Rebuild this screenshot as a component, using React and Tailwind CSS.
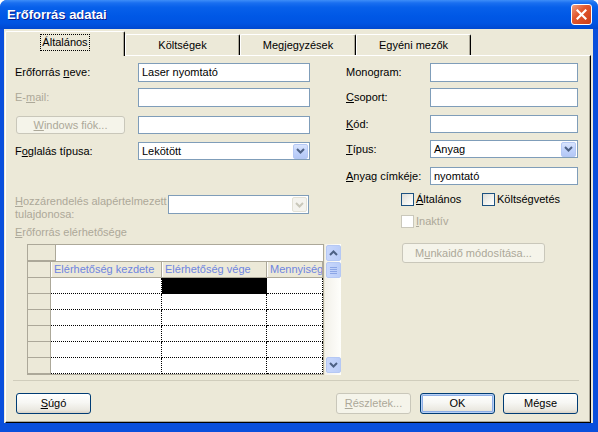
import React from 'react';

const FONT = { fontFamily: '"Liberation Sans", Arial, sans-serif' };

// underline for the access-key letter
const U = ({ children }) => <span className="underline underline-offset-[1px]">{children}</span>;

function Chevron({ up = false, color = '#4D6185' }) {
  return (
    <svg width="9" height="6" viewBox="0 0 9 6" className="block">
      <path d={up ? 'M1 5 L4.5 1.5 L8 5' : 'M1 1 L4.5 4.5 L8 1'} fill="none" stroke={color} strokeWidth="2" />
    </svg>
  );
}

function TextBox({ value = '', className = '' }) {
  return (
    <div className={`h-full bg-white border border-[#7F9DB9] flex items-center pl-[3px] text-black ${className}`}>
      {value}
    </div>
  );
}

function Select({ value = '', disabled = false, className = '' }) {
  return (
    <div className={`h-full bg-white border border-[#7F9DB9] flex items-center pl-[3px] pr-[1px] ${className}`}>
      <span className="flex-1">{value}</span>
      {disabled ? (
        <div className="w-[15px] h-[15px] rounded-[2px] bg-[#F4F3EE] border border-[#E3E1D6] flex items-center justify-center">
          <Chevron color="#C9C7BA" />
        </div>
      ) : (
        <div className="w-[15px] h-[15px] rounded-[2px] bg-[linear-gradient(180deg,#D9E4FD_0%,#C1D3FB_50%,#B4C8F6_100%)] border border-[#B5C8F4] flex items-center justify-center">
          <Chevron />
        </div>
      )}
    </div>
  );
}

function XPButton({ children, disabled = false, isDefault = false, className = '' }) {
  if (disabled) {
    return (
      <div className={`h-[21px] rounded-[3px] border border-[#C9C7BA] bg-[#F5F4EA] text-[#ACA899] flex items-center justify-center ${className}`}>
        {children}
      </div>
    );
  }
  return (
    <div
      className={`h-[21px] rounded-[3px] border border-[#003C74] bg-[linear-gradient(180deg,#FFFFFF_0%,#F7F7F4_45%,#EAE8E0_85%,#D8D2C6_100%)] text-black flex items-center justify-center ${
        isDefault ? 'shadow-[inset_0_0_0_1px_#B9D1F6,inset_0_0_0_2px_#8DAEE6]' : ''
      } ${className}`}
    >
      {children}
    </div>
  );
}

function Checkbox({ label, disabled = false }) {
  return (
    <div className="flex items-center h-[13px]">
      <div
        className={`w-[13px] h-[13px] border ${
          disabled ? 'border-[#CAC8BB] bg-white' : 'border-[#1C5180] bg-[linear-gradient(135deg,#DCDCD7_0%,#F4F4F0_60%,#FFFFFF_100%)]'
        }`}
      />
      <span className={`ml-[2px] ${disabled ? 'text-[#ACA899]' : 'text-black'}`}>{label}</span>
    </div>
  );
}

function ScrollBtn({ up }) {
  return (
    <div className="w-[15px] h-[16px] rounded-[2px] bg-[linear-gradient(90deg,#C8D7FC_0%,#BACDF8_100%)] border border-[#B5C8F4] flex items-center justify-center">
      <Chevron up={up} />
    </div>
  );
}

const COLS = [
  { title: 'Elérhetőség kezdete', w: 'w-[111px]' },
  { title: 'Elérhetőség vége', w: 'w-[105px]' },
  { title: 'Mennyiség', w: 'w-[56px]' },
];

function AvailabilityGrid() {
  const rows = [0, 1, 2, 3, 4, 5, 6];
  return (
    <div className="flex h-[131px] w-[314px]">
      <div className="w-[297px] h-full border border-[#ACA899] overflow-hidden bg-white">
        {/* empty top row */}
        <div className="flex h-[16px]">
          <div className="w-[28px] h-full bg-[#ECE9D8] border-r border-b border-[#ACA899]" />
          <div className="flex-1 h-full bg-white" />
        </div>
        {/* column headers */}
        <div className="flex h-[17px]">
          <div className="w-[23px] h-full bg-[#ECE9D8] border-r border-b border-t border-[#ACA899]" />
          {COLS.map((c) => (
            <div
              key={c.title}
              className={`${c.w} h-full bg-[#ECE9D8] border-r border-b border-t border-[#ACA899] shadow-[inset_1px_0_0_#FFFFFF] text-[#6E85E0] pl-[3px] flex items-center whitespace-nowrap overflow-hidden`}
            >
              {c.title}
            </div>
          ))}
        </div>
        {rows.map((r) => (
          <div key={r} className="flex h-[16px]">
            <div className="w-[23px] h-full bg-[#ECE9D8] border-r border-b border-[#ACA899]" />
            {COLS.map((c, i) => (
              <div
                key={c.title}
                className={`${c.w} h-full border-r border-b border-dotted border-black ${r === 0 && i === 1 ? 'bg-black' : 'bg-white'}`}
              />
            ))}
          </div>
        ))}
      </div>
      {/* vertical scroll bar */}
      <div className="ml-[1px] w-[16px] h-full bg-[linear-gradient(90deg,#F3F1EA_0%,#FEFEFB_100%)] flex flex-col items-center pt-[1px]">
        <ScrollBtn up />
        <div className="mt-[1px] w-[15px] h-[16px] rounded-[2px] bg-[linear-gradient(90deg,#C8D7FC_0%,#BACDF8_100%)] border border-[#B5C8F4] flex flex-col items-center justify-center gap-[1px]">
          <div className="w-[7px] h-[1px] bg-[#8CA6E6]" />
          <div className="w-[7px] h-[1px] bg-[#8CA6E6]" />
          <div className="w-[7px] h-[1px] bg-[#8CA6E6]" />
          <div className="w-[7px] h-[1px] bg-[#8CA6E6]" />
        </div>
        <div className="flex-1" />
        <div className="mb-[2px]">
          <ScrollBtn />
        </div>
      </div>
    </div>
  );
}

function Tab({ children, active = false, className = '' }) {
  if (active) {
    return (
      <div
        className={`relative z-10 h-[25px] mb-[-1px] bg-[#ECE9D8] border-l border-t border-white border-r border-r-black rounded-t-[2px] shadow-[inset_-1px_0_0_#ACA899] flex items-start justify-center pt-[3px] ${className}`}
      >
        <span className="outline-1 outline-dotted outline-black px-[1px] leading-[15px]">{children}</span>
      </div>
    );
  }
  return (
    <div
      className={`h-[21px] bg-[#ECE9D8] border-l border-t border-white border-r border-r-black rounded-t-[2px] shadow-[inset_-1px_0_0_#ACA899] flex items-center justify-center ${className}`}
    >
      {children}
    </div>
  );
}

export default function App() {
  return (
    <div className="w-[598px] h-[432px] overflow-hidden bg-white text-[11px] leading-[13px]" style={FONT}>
      <div className="w-full h-full rounded-t-[7px] bg-[#0A4FDC] flex flex-col overflow-hidden">
        {/* Title bar */}
        <div className="h-[29px] shrink-0 flex items-center pl-[7px] pr-[6px] bg-[linear-gradient(180deg,#3E8EF8_0%,#1A6FF0_10%,#0760EA_25%,#0058E6_55%,#0054E2_80%,#0048D0_100%)]">
          <span className="flex-1 text-white font-bold text-[13px] [text-shadow:1px_1px_0_#0A1C8C]">Erőforrás adatai</span>
          <div className="w-[21px] h-[21px] rounded-[3px] border border-white bg-[linear-gradient(135deg,#F0A080_0%,#E2582F_40%,#CC3D18_100%)] flex items-center justify-center">
            <svg width="11" height="11" viewBox="0 0 11 11">
              <path d="M1.5 1.5 L9.5 9.5 M9.5 1.5 L1.5 9.5" stroke="#FFFFFF" strokeWidth="2.2" strokeLinecap="square" />
            </svg>
          </div>
        </div>

        {/* Client area */}
        <div className="ml-[4px] w-[589px] h-[394px] bg-[#ECE9D8] text-black flex flex-col">
          {/* Tab strip */}
          <div className="h-[26px] shrink-0 flex items-end pl-[1px]">
            <Tab active className="w-[120px]">Általános</Tab>
            <Tab className="w-[115px]">Költségek</Tab>
            <Tab className="w-[116px]">Megjegyzések</Tab>
            <Tab className="w-[115px]">Egyéni mezők</Tab>
          </div>

          {/* Tab page */}
          <div className="ml-[1px] w-[586px] h-[368px] border-l border-t border-white border-r border-b border-r-black border-b-black shadow-[inset_-1px_-1px_0_#ACA899] flex flex-col">
            <div className="flex pl-[8px] pt-[7px]">
              {/* Left column */}
              <div className="w-[326px] flex flex-col">
                <div className="flex items-center h-[19px]">
                  <span className="w-[124px] pl-[1px]">Erőforrás <U>n</U>eve:</span>
                  <TextBox value="Laser nyomtató" className="w-[172px]" />
                </div>
                <div className="flex items-center h-[19px] mt-[6px]">
                  <span className="w-[124px] pl-[1px] text-[#ACA899]">E-<U>m</U>ail:</span>
                  <TextBox className="w-[172px]" />
                </div>
                <div className="flex items-center h-[18px] mt-[9px]">
                  <XPButton disabled className="ml-[2px] w-[109px] !h-[18px]">
                    <span><U>W</U>indows fiók...</span>
                  </XPButton>
                  <TextBox className="ml-[13px] w-[172px]" />
                </div>
                <div className="flex items-center h-[18px] mt-[8px]">
                  <span className="w-[124px] pl-[1px]">F<U>o</U>glalás típusa:</span>
                  <Select value="Lekötött" className="w-[172px]" />
                </div>

                <div className="flex items-start h-[26px] mt-[35px]">
                  <div className="w-[154px] pl-[1px] leading-[13px] text-[#ACA899] flex flex-col">
                    <span><U>H</U>ozzárendelés alapértelmezett</span>
                    <span>tulajdonosa:</span>
                  </div>
                  <Select disabled className="w-[141px] !h-[19px]" />
                </div>
                <div className="mt-[5px] h-[13px] pl-[1px] text-[#ACA899]">
                  <U>E</U>rőforrás elérhetősége
                </div>
                <div className="mt-[5px] ml-[13px]">
                  <AvailabilityGrid />
                </div>
              </div>

              {/* Right column */}
              <div className="ml-[6px] w-[232px] flex flex-col">
                <div className="flex items-center h-[19px]">
                  <span className="w-[84px]">Monogram:</span>
                  <TextBox className="w-[148px]" />
                </div>
                <div className="flex items-center h-[19px] mt-[6px]">
                  <span className="w-[84px]"><U>C</U>soport:</span>
                  <TextBox className="w-[148px]" />
                </div>
                <div className="flex items-center h-[18px] mt-[8px]">
                  <span className="w-[84px]"><U>K</U>ód:</span>
                  <TextBox className="w-[148px]" />
                </div>
                <div className="flex items-center h-[18px] mt-[7px]">
                  <span className="w-[84px]"><U>T</U>ípus:</span>
                  <Select value="Anyag" className="w-[148px]" />
                </div>
                <div className="flex items-center h-[18px] mt-[9px]">
                  <span className="w-[84px]"><U>A</U>nyag címkéje:</span>
                  <TextBox value="nyomtató" className="w-[148px]" />
                </div>
                <div className="flex items-center mt-[8px] ml-[55px]">
                  <div className="w-[81px]">
                    <Checkbox label={<><U>Á</U>ltalános</>} />
                  </div>
                  <Checkbox label={<>Költsé<U>g</U>vetés</>} />
                </div>
                <div className="mt-[9px] ml-[55px]">
                  <Checkbox disabled label={<><U>I</U>naktív</>} />
                </div>
                <XPButton disabled className="mt-[15px] ml-[56px] w-[143px] !h-[20px]">
                  <span>M<U>u</U>nkaidő módosítása...</span>
                </XPButton>
              </div>
            </div>

            {/* separator */}
            <div className="mt-[5px] ml-[7px] w-[566px] h-[1px] bg-[#D0CDBC]" />

            {/* Buttons */}
            <div className="mt-[12px] flex items-center">
              <XPButton className="ml-[10px] w-[75px]">
                <span><U>S</U>úgó</span>
              </XPButton>
              <XPButton disabled className="ml-[245px] w-[75px]">
                <span><U>R</U>észletek...</span>
              </XPButton>
              <XPButton isDefault className="ml-[9px] w-[75px]">OK</XPButton>
              <XPButton className="ml-[8px] w-[75px]">Mégse</XPButton>
            </div>
          </div>
        </div>
      </div>
    </div>
  );
}
